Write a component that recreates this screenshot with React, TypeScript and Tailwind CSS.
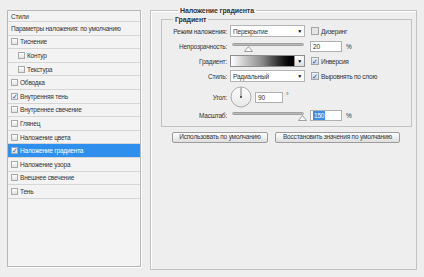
import React from 'react';

interface StyleRow {
    label: string;
    checked?: boolean;
    indent?: boolean;
    selected?: boolean;
}

const rows: StyleRow[] = [
    { label: 'Тиснение' },
    { label: 'Контур', indent: true },
    { label: 'Текстура', indent: true },
    { label: 'Обводка' },
    { label: 'Внутренняя тень', checked: true },
    { label: 'Внутреннее свечение' },
    { label: 'Глянец' },
    { label: 'Наложение цвета' },
    { label: 'Наложение градиента', checked: true, selected: true },
    { label: 'Наложение узора' },
    { label: 'Внешнее свечение' },
    { label: 'Тень' },
];

const SmallBox: React.FC<{ checked?: boolean }> = ({ checked }) => (
    <span className="w-[7px] h-[7px] shrink-0 border border-[#a9a9a9] bg-linear-to-b from-white to-[#e2e2e2] flex items-center justify-center text-[7px] leading-none tracking-normal text-[#2d4f9e]">
        {checked ? '✓' : ''}
    </span>
);

const CheckOpt: React.FC<{ label: string; checked?: boolean; dim?: boolean }> = ({ label, checked, dim }) => (
    <div className="flex items-center gap-[2px]">
        <span className={`w-[8px] h-[8px] shrink-0 border border-[#a4a4a4] flex items-center justify-center text-[7px] leading-none tracking-normal text-[#2848a8] ${checked ? 'bg-linear-to-b from-[#eef2fa] to-[#c9d2e4]' : dim ? 'bg-[#e4e4e4]' : 'bg-white'}`}>
            {checked ? '✓' : ''}
        </span>
        <span>{label}</span>
    </div>
);

const Select: React.FC<{ value: string }> = ({ value }) => (
    <div className="w-[75px] h-full bg-white border border-[#b4b4b4] flex items-center justify-between pl-[2px] pr-[2px]">
        <span>{value}</span>
        <span className="text-[5px] leading-none text-black">▼</span>
    </div>
);

const Slider: React.FC<{ pos: number }> = ({ pos }) => (
    <div className="relative w-[72px] h-full ml-[1px]">
        <div className="absolute left-0 right-0 top-[3px] h-[3px] rounded-full bg-linear-to-b from-[#d6d6d6] to-[#9e9e9e] border border-[#a0a0a0]" />
        <svg className="absolute top-[6px]" style={{ left: pos - 4 }} width="9" height="6" viewBox="0 0 9 6">
            <path d="M4.5 0.5 L8.5 5.5 L0.5 5.5 Z" fill="#fafafa" stroke="#8a8a8a" strokeWidth="0.8" />
        </svg>
    </div>
);

const Field: React.FC<{ value: string; highlight?: boolean; w?: string }> = ({ value, highlight, w }) => (
    <div className={`${w ?? 'w-[32px]'} h-[11px] bg-white border border-[#b0b0b0] flex items-center pl-[2px]`}>
        {highlight ? <span className="bg-[#3a8ee6] text-white px-[1px]">{value}</span> : <span>{value}</span>}
    </div>
);

const Label: React.FC<{ text: string }> = ({ text }) => (
    <div className="w-[66px] shrink-0 text-right pr-[1px]">{text}</div>
);

export default function App() {
    return (
        <div className="w-[424px] h-[277px] bg-[#eeeeee] flex pl-[7px] pt-[10px] text-[6.5px] tracking-[-0.2px] leading-[9px] text-[#333333] overflow-hidden" style={{ fontFamily: '"Liberation Sans", Arial, sans-serif' }}>
            {/* styles list */}
            <div className="w-[134px] h-[257px] border border-[#b8b8b8] bg-[#f3f3f3] flex flex-col shadow-[1px_1px_0_#ffffff]">
                <div className="h-[11px] flex items-center pl-[3px] border-b border-[#d6d6d6]">Стили</div>
                <div className="h-[13.6px] flex items-center pl-[3px] border-b border-[#d6d6d6]">Параметры наложения: по умолчанию</div>
                {rows.map((r, i) => (
                    <div
                        key={i}
                        className={`h-[13.6px] flex items-center gap-[2px] border-b border-[#d6d6d6] ${r.indent ? 'pl-[10px]' : 'pl-[3px]'} ${r.selected ? 'bg-[#2f8fec] text-white' : ''}`}
                    >
                        <SmallBox checked={r.checked} />
                        <span>{r.label}</span>
                    </div>
                ))}
            </div>

            {/* settings */}
            <fieldset className="ml-[9px] -mt-[4px] w-[267px] h-[264px] border border-[#c2c2c2] pl-[10px] pr-[4px] shadow-[inset_1px_1px_0_#ffffff]">
                <legend className="ml-[17px] px-[2px] font-bold text-[7px] tracking-[-0.1px]">Наложение градиента</legend>
                <fieldset className="border border-[#c2c2c2] pt-[1px] pb-[5px]">
                    <legend className="ml-[11px] px-[2px] font-bold text-[7px] tracking-[-0.1px]">Градиент</legend>
                    <div className="flex flex-col">
                        <div className="h-[12px] flex items-center">
                            <Label text="Режим наложения:" />
                            <div className="ml-[2px] h-full"><Select value="Перекрытие" /></div>
                            <div className="ml-[6px]"><CheckOpt label="Дизеринг" dim /></div>
                        </div>
                        <div className="mt-[3px] h-[12px] flex items-center">
                            <Label text="Непрозрачность:" />
                            <div className="ml-[3px] h-full"><Slider pos={16} /></div>
                            <div className="ml-[6px]"><Field value="20" /></div>
                            <span className="ml-[4px]">%</span>
                        </div>
                        <div className="mt-[3px] h-[12px] flex items-center">
                            <Label text="Градиент:" />
                            <div className="ml-[2px] h-full w-[75px] flex border border-[#8e8e8e]">
                                <div className="flex-1 bg-linear-to-r from-white via-[#8a8a8a] to-black" />
                                <div className="w-[10px] bg-linear-to-b from-white to-[#dcdcdc] border-l border-[#8e8e8e] flex items-center justify-center text-[5px] leading-none text-black">▼</div>
                            </div>
                            <div className="ml-[6px]"><CheckOpt label="Инверсия" checked /></div>
                        </div>
                        <div className="mt-[3px] h-[12px] flex items-center">
                            <Label text="Стиль:" />
                            <div className="ml-[2px] h-full"><Select value="Радиальный" /></div>
                            <div className="ml-[6px]"><CheckOpt label="Выровнять по слою" checked /></div>
                        </div>
                        <div className="mt-[4px] h-[22px] flex items-center">
                            <Label text="Угол:" />
                            <svg className="ml-[2px]" width="22" height="22" viewBox="0 0 22 22">
                                <defs>
                                    <linearGradient id="dial" x1="0" y1="0" x2="0" y2="1">
                                        <stop offset="0" stopColor="#ffffff" />
                                        <stop offset="1" stopColor="#e6e6e6" />
                                    </linearGradient>
                                </defs>
                                <circle cx="11" cy="11" r="10" fill="url(#dial)" stroke="#9a9a9a" strokeWidth="0.8" />
                                <line x1="11" y1="11" x2="11" y2="1.5" stroke="#555" strokeWidth="0.8" />
                                <circle cx="11" cy="11" r="1" fill="#333" />
                            </svg>
                            <div className="ml-[3px]"><Field value="90" w="w-[28px]" /></div>
                            <span className="ml-[3px] -mt-[4px]">°</span>
                        </div>
                        <div className="mt-[1px] h-[12px] flex items-center">
                            <Label text="Масштаб:" />
                            <div className="ml-[3px] h-full"><Slider pos={70} /></div>
                            <div className="ml-[6px]"><Field value="150" highlight /></div>
                            <span className="ml-[4px]">%</span>
                        </div>
                    </div>
                </fieldset>
                <div className="mt-[5px] ml-[11px] flex gap-[7px]">
                    <button className="w-[96px] h-[11px] rounded-[2px] border border-[#9c9c9c] bg-linear-to-b from-white to-[#dedede] text-[6.5px] tracking-[-0.2px] leading-none whitespace-nowrap text-[#333]">Использовать по умолчанию</button>
                    <button className="w-[125px] h-[11px] rounded-[2px] border border-[#9c9c9c] bg-linear-to-b from-white to-[#dedede] text-[6.5px] tracking-[-0.2px] leading-none whitespace-nowrap text-[#333]">Восстановить значения по умолчанию</button>
                </div>
            </fieldset>
        </div>
    );
}
